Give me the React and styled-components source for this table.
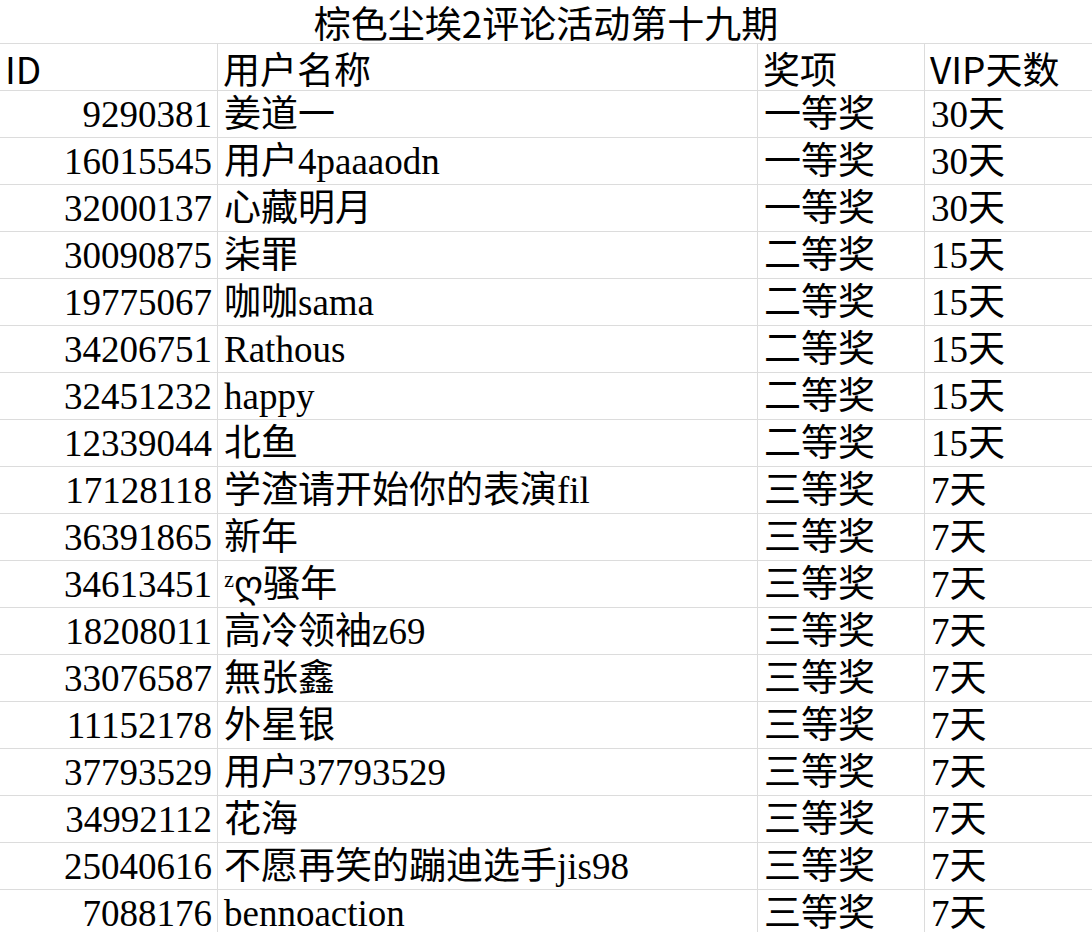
import React from "react";
import styled, { createGlobalStyle } from "styled-components";

const GlobalStyle = createGlobalStyle`
  html, body {
    margin: 0;
    padding: 0;
    background: #ffffff;
  }
`;

const Sheet = styled.div`
  width: 1092px;
  color: #000;
  font-family: "Liberation Serif", "Noto Sans CJK SC", serif;
`;

const Title = styled.div`
  height: 44px;
  box-sizing: border-box;
  border-bottom: 1px solid #dcdcdc;
  display: flex;
  align-items: center;
  justify-content: center;
  font-family: "Noto Sans CJK SC", sans-serif;
  font-size: 37px;
  font-weight: 400;
  line-height: 1;
  padding-top: 2px;
`;

const Row = styled.div`
  display: grid;
  grid-template-columns: 218px 540px 167px 1fr;
  height: 46px;
  border-bottom: 1px solid #dcdcdc;
`;

const Cell = styled.div`
  display: flex;
  align-items: center;
  justify-content: ${(p) => (p.$right ? "flex-end" : "flex-start")};
  padding: ${(p) => (p.$right ? "1px 5px 0 0" : "1px 0 0 6px")};
  border-right: ${(p) => (p.$last ? "none" : "1px solid #dcdcdc")};
  font-size: 37px;
  line-height: 1;
  white-space: nowrap;
`;

const HeadCell = styled(Cell)`
  font-family: "Noto Sans CJK SC", sans-serif;
  font-weight: 400;
  padding-left: 5px;
  padding-top: 3px;
`;

const rows = [
  ["9290381", "姜道一", "一等奖", "30天"],
  ["16015545", "用户4paaaodn", "一等奖", "30天"],
  ["32000137", "心藏明月", "一等奖", "30天"],
  ["30090875", "柒罪", "二等奖", "15天"],
  ["19775067", "咖咖sama", "二等奖", "15天"],
  ["34206751", "Rathous", "二等奖", "15天"],
  ["32451232", "happy", "二等奖", "15天"],
  ["12339044", "北鱼", "二等奖", "15天"],
  ["17128118", "学渣请开始你的表演fil", "三等奖", "7天"],
  ["36391865", "新年", "三等奖", "7天"],
  ["34613451", "ᶻღ骚年", "三等奖", "7天"],
  ["18208011", "高冷领袖z69", "三等奖", "7天"],
  ["33076587", "無张鑫", "三等奖", "7天"],
  ["11152178", "外星银", "三等奖", "7天"],
  ["37793529", "用户37793529", "三等奖", "7天"],
  ["34992112", "花海", "三等奖", "7天"],
  ["25040616", "不愿再笑的蹦迪选手jis98", "三等奖", "7天"],
  ["7088176", "bennoaction", "三等奖", "7天"],
];

export default function App() {
  return (
    <Sheet>
      <GlobalStyle />
      <Title>棕色尘埃2评论活动第十九期</Title>
      <Row>
        <HeadCell>ID</HeadCell>
        <HeadCell>用户名称</HeadCell>
        <HeadCell>奖项</HeadCell>
        <HeadCell $last>VIP天数</HeadCell>
      </Row>
      {rows.map(([id, name, prize, days]) => (
        <Row key={id}>
          <Cell $right>{id}</Cell>
          <Cell>{name}</Cell>
          <Cell>{prize}</Cell>
          <Cell $last>{days}</Cell>
        </Row>
      ))}
    </Sheet>
  );
}
